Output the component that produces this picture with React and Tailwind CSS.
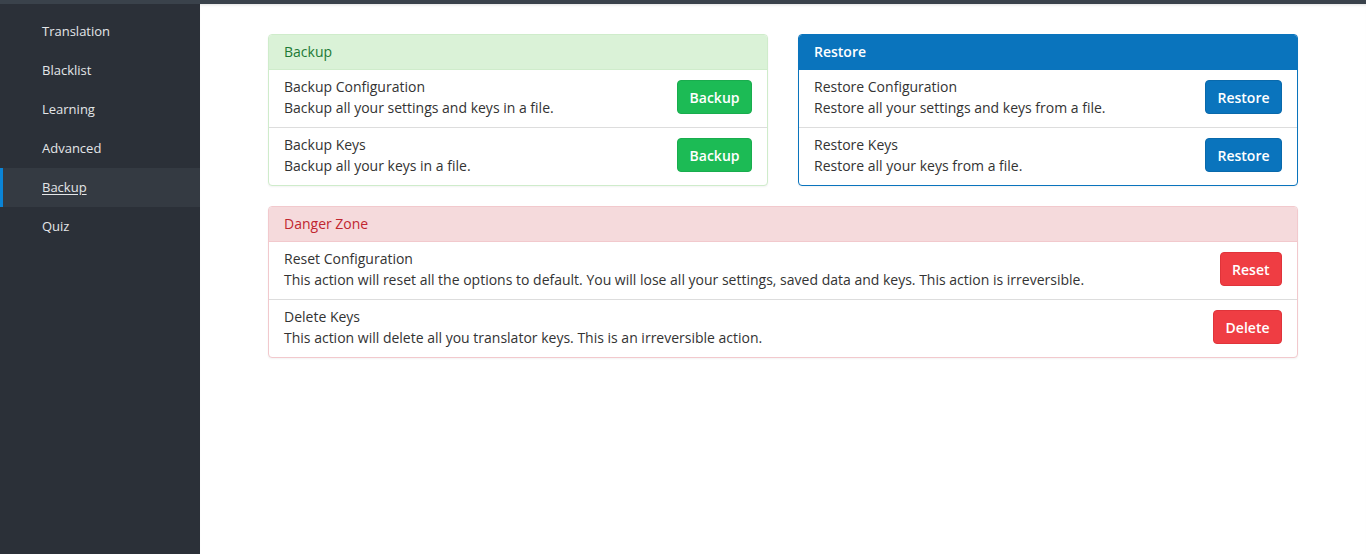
import React from 'react';

const navItems = ['Translation', 'Blacklist', 'Learning', 'Advanced', 'Backup', 'Quiz'];

const themes = {
    success: {
        card: 'border-[#cfeccb]',
        header: 'bg-[#daf2d7] text-[#1d7a35] border-[#cfeccb]',
        button: 'bg-[#1cbb55] border-[#19ad4e]',
    },
    primary: {
        card: 'border-[#0a74bd]',
        header: 'bg-[#0a74bd] text-white font-semibold border-[#0a74bd]',
        button: 'bg-[#0a74bd] border-[#0969ab]',
    },
    danger: {
        card: 'border-[#f2c9cd]',
        header: 'bg-[#f5dadc] text-[#c1262f] border-[#f2c9cd]',
        button: 'bg-[#ef3d43] border-[#e0343a]',
    },
};

const Card = ({ title, theme, rows, className = '' }) => {
    const t = themes[theme];
    return (
        <div className={`border rounded-[4px] overflow-hidden bg-white shadow-[0_1px_2px_rgba(0,0,0,0.05)] ${t.card} ${className}`}>
            <div className={`h-[35px] px-[15px] pb-[1px] flex items-center border-b ${t.header}`}>{title}</div>
            {rows.map((row, i) => (
                <div key={i} className={`h-[57px] px-[15px] pb-[3px] flex items-center justify-between ${i > 0 ? 'h-[58px] border-t border-[#dddddd]' : ''}`}>
                    <div className="leading-[21px] text-[#333333]">
                        <div>{row.title}</div>
                        <div>{row.desc}</div>
                    </div>
                    <button className={`h-[34px] px-[11.5px] rounded-[4px] border text-white font-semibold ${t.button}`}>
                        {row.action}
                    </button>
                </div>
            ))}
        </div>
    );
};

const App = () => {
    return (
        <div className="min-h-[554px] h-screen flex flex-col bg-white text-[14px]" style={{ fontFamily: '"Open Sans", "Noto Sans", sans-serif' }}>
            <div className="h-[4px] bg-[#3a424b] shrink-0" />
            <div className="flex flex-1">
                <aside className="w-[200px] shrink-0 bg-[#2b3038] pt-[8px]">
                    {navItems.map((item) => {
                        const active = item === 'Backup';
                        return (
                            <div
                                key={item}
                                className={`h-[39px] flex items-center pl-[42px] text-[13px] text-[#e4e6e8] relative ${active ? 'bg-[#343a42]' : ''}`}
                            >
                                {active && <span className="absolute left-0 top-0 bottom-0 w-[3px] bg-[#0a84d6]" />}
                                <span className={active ? 'underline underline-offset-2' : ''}>{item}</span>
                            </div>
                        );
                    })}
                </aside>
                <main className="flex-1 px-[68px] pt-[30px] shadow-[inset_0_3px_3px_-2px_rgba(0,0,0,0.12)]">
                    <div className="grid grid-cols-2 gap-[30px]">
                        <Card
                            title="Backup"
                            theme="success"
                            rows={[
                                { title: 'Backup Configuration', desc: 'Backup all your settings and keys in a file.', action: 'Backup' },
                                { title: 'Backup Keys', desc: 'Backup all your keys in a file.', action: 'Backup' },
                            ]}
                        />
                        <Card
                            title="Restore"
                            theme="primary"
                            rows={[
                                { title: 'Restore Configuration', desc: 'Restore all your settings and keys from a file.', action: 'Restore' },
                                { title: 'Restore Keys', desc: 'Restore all your keys from a file.', action: 'Restore' },
                            ]}
                        />
                    </div>
                    <Card
                        className="mt-[20px]"
                        title="Danger Zone"
                        theme="danger"
                        rows={[
                            {
                                title: 'Reset Configuration',
                                desc: 'This action will reset all the options to default. You will lose all your settings, saved data and keys. This action is irreversible.',
                                action: 'Reset',
                            },
                            {
                                title: 'Delete Keys',
                                desc: 'This action will delete all you translator keys. This is an irreversible action.',
                                action: 'Delete',
                            },
                        ]}
                    />
                </main>
            </div>
        </div>
    );
};

export default App;
